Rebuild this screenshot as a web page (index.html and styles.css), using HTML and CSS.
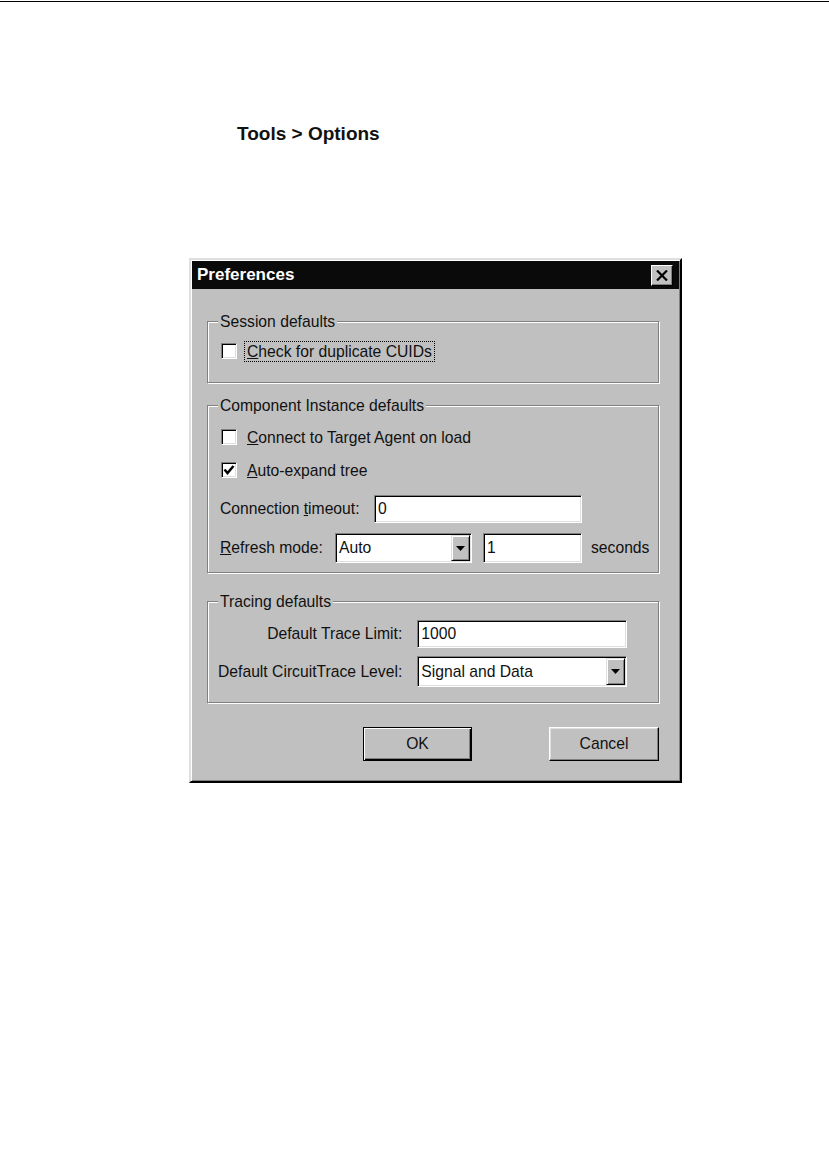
FILE: index.html
```html
<!DOCTYPE html>
<html lang="en">
<head>
  <meta charset="UTF-8">
  <title>Preferences</title>
  <link rel="stylesheet" href="styles.css">
</head>
<body>
  <div class="rule"></div>
  <p class="path">Tools &gt; Options</p>

  <div class="dialog">
    <div class="titlebar">
      <span class="title">Preferences</span>
      <span class="close-btn">
        <svg width="12" height="11" viewBox="0 0 12 11"><path d="M1 0.5 L11 10.5 M11 0.5 L1 10.5" stroke="#000" stroke-width="2.2"/></svg>
      </span>
    </div>

    <div class="dialog-body">
      <!-- Session -->
      <div class="group group-session">
        <div class="group-title">Session defaults</div>
        <div class="check-row">
          <span class="checkbox"></span>
          <span class="check-label focused"><u>C</u>heck for duplicate CUIDs</span>
        </div>
      </div>

      <!-- Component instance -->
      <div class="group group-instance">
        <div class="group-title">Component Instance defaults</div>
        <div class="check-row row-connect">
          <span class="checkbox"></span>
          <span class="check-label"><u>C</u>onnect to Target Agent on load</span>
        </div>
        <div class="check-row row-expand">
          <span class="checkbox">
            <svg width="14" height="14" viewBox="0 0 14 14"><path d="M2.5 6.5 L5.5 10 L11.5 3" fill="none" stroke="#000" stroke-width="2.5"/></svg>
          </span>
          <span class="check-label"><u>A</u>uto-expand tree</span>
        </div>
        <div class="field-row row-timeout">
          <span class="lbl lbl-timeout">Connection <u>t</u>imeout:</span>
          <span class="field field-timeout">0</span>
        </div>
        <div class="field-row row-refresh">
          <span class="lbl lbl-refresh"><u>R</u>efresh mode:</span>
          <span class="field combo combo-refresh">
            <span class="combo-value">Auto</span>
            <span class="combo-arrow"><svg width="9" height="5" viewBox="0 0 9 5"><path d="M0 0 H9 L4.5 5 Z" fill="#000"/></svg></span>
          </span>
          <span class="field field-seconds">1</span>
          <span class="lbl lbl-seconds">seconds</span>
        </div>
      </div>

      <!-- Tracing -->
      <div class="group group-tracing">
        <div class="group-title">Tracing defaults</div>
        <div class="trace-grid">
          <span class="lbl lbl-right">Default Trace Limit:</span>
          <span class="field field-limit">1000</span>
          <span class="lbl lbl-right">Default CircuitTrace Level:</span>
          <span class="field combo combo-level">
            <span class="combo-value">Signal and Data</span>
            <span class="combo-arrow"><svg width="9" height="5" viewBox="0 0 9 5"><path d="M0 0 H9 L4.5 5 Z" fill="#000"/></svg></span>
          </span>
        </div>
      </div>

      <div class="buttons">
        <span class="btn btn-default btn-ok">OK</span>
        <span class="btn btn-cancel">Cancel</span>
      </div>
    </div>
  </div>
</body>
</html>
```

FILE: styles.css
```css
body {
    margin: 0;
    background: #fff;
    font-family: "Liberation Sans", Arial, sans-serif;
    color: #111;
}

.rule {
    height: 1px;
    margin-top: 1px;
    background: #000;
}

.path {
    margin: 122px 0 0 237px;
    font-weight: bold;
    font-size: 19px;
    line-height: 20px;
}

/* Dialog frame */

.dialog {
    box-sizing: border-box;
    width: 493px;
    margin: 114px 0 0 189px;
    padding: 1px;
    background: #c0c0c0;
    border: 2px solid;
    border-color: #dfdfdf #000 #000 #dfdfdf;
    box-shadow: inset 1px 1px 0 #fff, inset -1px -1px 0 #808080;
    font-size: 15.7px;
}

.titlebar {
    height: 28px;
    display: flex;
    align-items: center;
    justify-content: space-between;
    padding: 0 6px 0 5px;
    background: #0a0a0a;
}

.title {
    color: #fff;
    font-weight: bold;
    font-size: 17px;
}

.close-btn {
    box-sizing: border-box;
    width: 22px;
    height: 21px;
    display: flex;
    align-items: center;
    justify-content: center;
    background: #c0c0c0;
    border: 1px solid;
    border-color: #fff #000 #000 #fff;
    box-shadow: inset -1px -1px 0 #808080;
}

.dialog-body {
    padding: 32px 20px 19px 15px;
}

/* Group boxes */

.group {
    border: 1px solid #808080;
    box-shadow: inset 1px 1px 0 #fff, 1px 1px 0 #fff;
}

.group-title {
    width: fit-content;
    margin: -9px 0 0 10px;
    padding: 0 2px;
    line-height: 17px;
    background: #c0c0c0;
}

.group-session {
    padding-bottom: 20px;
}

.group-instance {
    margin-top: 22px;
    padding-bottom: 9px;
}

.group-tracing {
    margin-top: 28px;
    padding-bottom: 15px;
}

/* Check boxes */

.check-row {
    display: flex;
    align-items: center;
    height: 22px;
    margin: 10px 0 0 13px;
}

.row-connect {
    margin-top: 12px;
}

.row-expand {
    margin-top: 11px;
}

.checkbox {
    box-sizing: border-box;
    width: 16px;
    height: 16px;
    display: flex;
    align-items: center;
    justify-content: center;
    background: #fff;
    border: 1px solid;
    border-color: #808080 #fff #fff #808080;
    box-shadow: inset 1px 1px 0 #000, inset -1px -1px 0 #dfdfdf;
}

.check-label {
    margin-left: 7px;
    padding: 0 2px;
    line-height: 19px;
    border: 1px dotted transparent;
}

.check-label.focused {
    border-color: #000;
}

/* Edit fields and combos */

.lbl {
    white-space: nowrap;
}

.field-row {
    display: flex;
    align-items: center;
    margin-left: 12px;
}

.row-timeout {
    margin-top: 14px;
}

.row-refresh {
    margin-top: 10px;
}

.lbl-timeout {
    width: 154px;
}

.lbl-refresh {
    width: 115px;
}

.lbl-seconds {
    margin-left: 9px;
}

.field {
    box-sizing: border-box;
    display: flex;
    align-items: center;
    padding-left: 3px;
    background: #fff;
    border: 1px solid;
    border-color: #808080 #fff #fff #808080;
    box-shadow: inset 1px 1px 0 #000, inset -1px -1px 0 #dfdfdf;
}

.field-timeout {
    width: 208px;
    height: 28px;
}

.combo-refresh {
    width: 137px;
    height: 30px;
}

.field-seconds {
    width: 99px;
    height: 30px;
    margin-left: 11px;
}

.combo {
    padding-right: 0;
}

.combo-value {
    flex: 1;
}

.combo-arrow {
    box-sizing: border-box;
    width: 19px;
    align-self: stretch;
    margin: 1px;
    display: flex;
    align-items: center;
    justify-content: center;
    background: #c0c0c0;
    border: 1px solid;
    border-color: #dfdfdf #000 #000 #dfdfdf;
    box-shadow: inset 1px 1px 0 #fff, inset -1px -1px 0 #808080;
}

.trace-grid {
    display: grid;
    grid-template-columns: max-content 210px;
    column-gap: 15px;
    row-gap: 8px;
    align-items: center;
    margin: 10px 0 0 10px;
}

.lbl-right {
    text-align: right;
}

.field-limit {
    height: 28px;
}

.combo-level {
    height: 31px;
}

/* Buttons */

.buttons {
    display: flex;
    justify-content: flex-end;
    gap: 77px;
    margin-top: 24px;
}

.btn {
    box-sizing: border-box;
    height: 34px;
    display: flex;
    align-items: center;
    justify-content: center;
    background: #c0c0c0;
    border: 1px solid;
    border-color: #fff #000 #000 #fff;
    box-shadow: inset -1px -1px 0 #808080, inset 1px 1px 0 #dfdfdf;
}

.btn-ok {
    width: 109px;
}

.btn-cancel {
    width: 110px;
}

.btn-default {
    border-color: #000;
    box-shadow: inset 1px 1px 0 #fff, inset -1px -1px 0 #000, inset -2px -2px 0 #808080;
}
```
